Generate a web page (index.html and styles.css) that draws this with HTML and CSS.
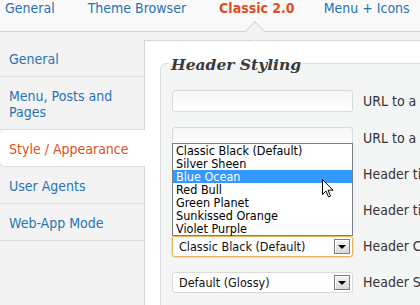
FILE: index.html
```html
<!DOCTYPE html>
<html lang="en">
<head>
  <meta charset="UTF-8" />
  <title>Classic 2.0 - Style / Appearance</title>
  <link rel="stylesheet" href="styles.css">
</head>
<body>

  <!-- Top tabs -->
  <nav class="tabs">
    <a class="tab">General</a>
    <a class="tab">Theme Browser</a>
    <a class="tab active">Classic 2.0</a>
    <a class="tab">Menu + Icons</a>
  </nav>

  <div class="layout">
    <!-- Side menu -->
    <ul class="side-menu">
      <li>General</li>
      <li class="wrap">Menu, Posts and Pages</li>
      <li class="active">Style / Appearance</li>
      <li>User Agents</li>
      <li>Web-App Mode</li>
    </ul>

    <!-- Settings panel -->
    <div class="panel">
      <fieldset class="group">
        <legend>Header Styling</legend>

        <div class="row first">
          <input type="text" class="field">
          <span class="label">URL to a custom logo image</span>
        </div>

        <div class="row">
          <input type="text" class="field">
          <span class="label">URL to a custom background image</span>
        </div>

        <div class="row">
          <input type="text" class="field">
          <span class="label">Header title color</span>
        </div>

        <div class="row">
          <input type="text" class="field">
          <span class="label">Header title shadow</span>
        </div>

        <div class="row">
          <div class="select focused">
            <span class="select-text">Classic Black (Default)</span>
            <span class="select-btn"></span>

            <ul class="dropdown">
              <li>Classic Black (Default)</li>
              <li>Silver Sheen</li>
              <li class="hover">Blue Ocean</li>
              <li>Red Bull</li>
              <li>Green Planet</li>
              <li>Sunkissed Orange</li>
              <li>Violet Purple</li>
            </ul>
            <svg class="cursor" width="12" height="19" viewBox="0 0 12 19">
              <path d="M0.5 0.5 L0.5 15.5 L4 12 L6.5 18 L8.5 17 L6 11.2 L11 11.2 Z" fill="#fff" stroke="#000" stroke-width="1" stroke-linejoin="miter"/>
            </svg>
          </div>
          <span class="label">Header Color Scheme</span>
        </div>

        <div class="row">
          <div class="select">
            <span class="select-text">Default (Glossy)</span>
            <span class="select-btn"></span>
          </div>
          <span class="label">Header Style</span>
        </div>
      </fieldset>
    </div>
  </div>

</body>
</html>
```

FILE: styles.css
```css
html, body {
  overflow: hidden;
}
body {
  margin: 0;
  font-family: "DejaVu Sans Condensed", "Liberation Sans", sans-serif;
  font-size: 14px;
  background: #f3f3f3;
  color: #333;
}

/* Top tabs */
.tabs {
  display: flex;
  gap: 33px;
  height: 31px;
  padding-left: 5px;
  background: #f9f9f9;
  border-bottom: 1px solid #d3d3d3;
}
.tab {
  position: relative;
  line-height: 16px;
  color: #2873b4;
  white-space: nowrap;
  cursor: pointer;
}
.tab.active {
  margin-right: -4px;
  color: #dd4f23;
  font-weight: bold;
}
.tab.active::after {
  content: "";
  position: absolute;
  left: calc(50% - 9px);
  top: 24px;
  width: 14px;
  height: 14px;
  box-sizing: border-box;
  background: #f3f3f3;
  border-top: 1px solid #d3d3d3;
  border-left: 1px solid #d3d3d3;
  transform: rotate(45deg);
}

.layout {
  display: flex;
  padding-top: 8px;
}

/* Side menu */
.side-menu {
  position: relative;
  z-index: 1;
  flex: 0 0 144px;
  margin: 0;
  padding: 0;
  list-style: none;
}
.side-menu li {
  padding: 11px 4px 9px 9px;
  line-height: 16px;
  color: #2873b4;
  white-space: nowrap;
  border-bottom: 1px solid #dcdcdc;
  cursor: pointer;
}
.side-menu li.wrap {
  padding-right: 20px;
  white-space: normal;
}
.side-menu li.active {
  margin-right: -1px;
  background: #fff;
  color: #dd4f23;
  border-radius: 5px 0 0 5px;
}

/* Panel */
.panel {
  flex: 0 0 600px;
  height: 400px;
  padding: 11px 0 0 15px;
  background: #fff;
  border-top: 1px solid #d6d6d6;
  border-left: 1px solid #d6d6d6;
}
.group {
  margin: 0;
  padding: 16px 11px 20px;
  background: #f4f5f5;
  border: 1px solid #dcdcdc;
  border-radius: 6px 0 0 0;
}
.group legend {
  margin-left: -3px;
  padding: 4px 2px 0;
  font-family: "DejaVu Serif", "Liberation Serif", serif;
  font-size: 15.5px;
  font-style: italic;
  font-weight: bold;
  line-height: 18px;
  color: #3a3a3a;
}

.row {
  display: flex;
  align-items: center;
  gap: 10px;
  height: 22px;
  margin-bottom: 14px;
}
.row.first {
  margin-bottom: 15px;
}
.label {
  white-space: nowrap;
  color: #333;
}
.field {
  width: 181px;
  height: 22px;
  box-sizing: border-box;
  margin: 0;
  border: 1px solid #dadada;
  border-radius: 3px;
  background: linear-gradient(#f6f6f6, #fff);
}

/* Fake select */
.select {
  position: relative;
  display: flex;
  align-items: center;
  width: 181px;
  height: 21px;
  box-sizing: border-box;
  padding: 0 2px 0 6px;
  font-size: 12.5px;
  color: #111;
  border: 1px solid #dadada;
  border-radius: 3px;
  background: linear-gradient(#fdfdfd, #fff);
}
.select.focused {
  border-color: #e9b45c;
  box-shadow: 0 0 0 1px rgba(240, 200, 120, 0.45);
}
.select-text {
  flex: 1;
  white-space: nowrap;
}
.select-btn {
  position: relative;
  width: 16px;
  height: 15px;
  box-sizing: border-box;
  border: 1px solid #7c7c7c;
  background: linear-gradient(#f2f2f2, #d9d9d9);
  box-shadow: inset 1px 1px 0 #fff;
}
.select-btn::after {
  content: "";
  position: absolute;
  left: 3px;
  top: 5px;
  border-left: 4px solid transparent;
  border-right: 4px solid transparent;
  border-top: 4px solid #000;
}

.dropdown {
  position: absolute;
  left: -1px;
  bottom: 100%;
  width: 181px;
  box-sizing: border-box;
  margin: 0 0 1px;
  padding: 0;
  list-style: none;
  background: #fff;
  border: 1px solid #7a7f86;
  font-size: 12.5px;
  line-height: 13px;
}
.dropdown li {
  padding-left: 3px;
  color: #000;
  white-space: nowrap;
}
.dropdown li.hover {
  background: #3399ff;
  color: #fff;
}
.cursor {
  position: absolute;
  left: 149px;
  top: -58px;
}
```
